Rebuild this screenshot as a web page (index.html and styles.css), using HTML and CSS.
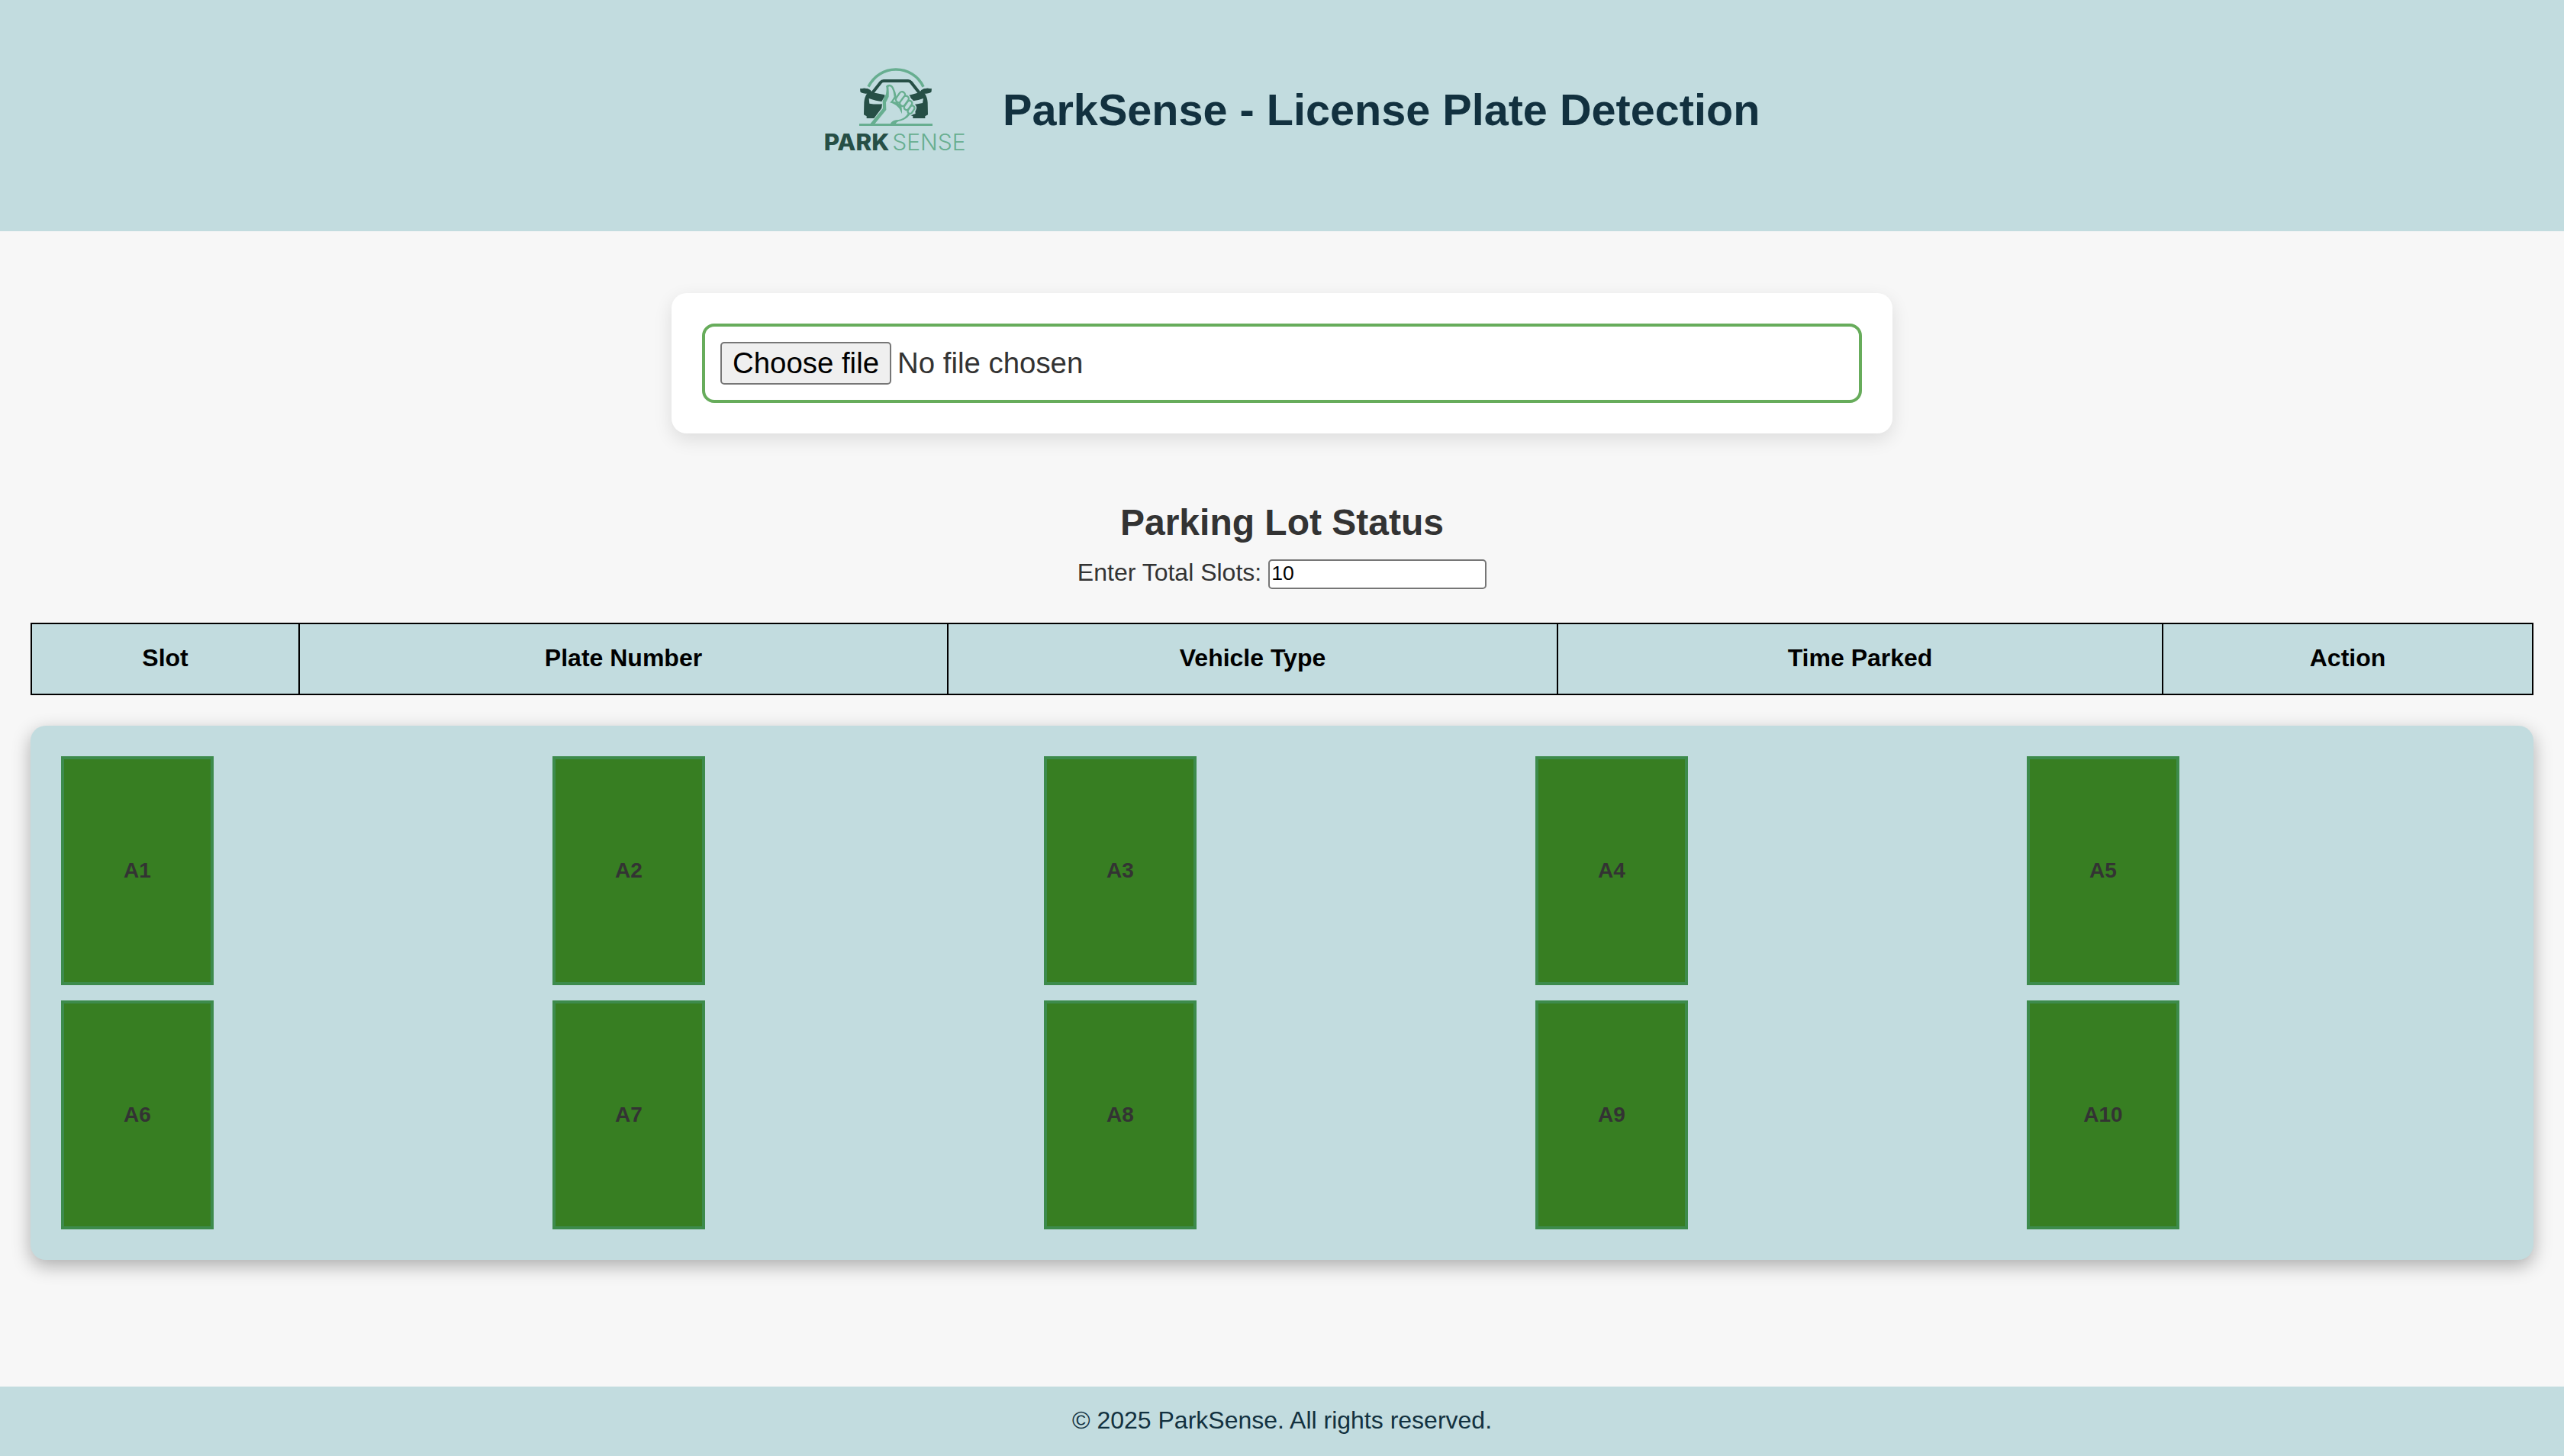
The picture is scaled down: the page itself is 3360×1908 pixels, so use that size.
FILE: index.html
```html
<!DOCTYPE html>
<html lang="en">
<head>
<meta charset="utf-8">
<title>ParkSense - License Plate Detection</title>
<link rel="stylesheet" href="styles.css">
</head>
<body>
<header class="header">
  <svg class="logo" viewBox="0 0 690 420" role="img" aria-label="Park Sense">
    <path class="mint-line" stroke-width="11" d="M234 131C256 88 296 63 342 63s88 25 108 68"/>
    <path class="dark-line" stroke-width="12" d="M249 156L282 114q5-6 12-6h96q7 0 12 6l33 42"/>
    <path class="dark" d="M204 139q14-4 28 0 12 4 16 14l50 10v6l-12 20q-20-2-50-12l2 20q24 4 50 2l-2 16-30 40h-29v-8l-11-6 1-48q1-20 11-35l8-11q-18 4-32-1-4-4-2-9Z"/>
    <path class="dark" d="M480 139q-14-4-28 0-12 4-16 14l-44 12 18 22q18-2 40-10l-3 18-32 6 4 36-20 6 10 4v8h48v-8l11-6-1-48q-1-20-11-35l-8-11q18 4 32-1 4-4 2-9Z"/>
    <path class="dark" d="M203 140q14-5 30 0l14 11q-6 9-24 7-18-2-21-8-1-5 1-10ZM481 140q-14-5-30 0l-14 11q6 9 24 7 18-2 21-8 1-5-1-10Z"/>
    <g class="finger-gap">
      <rect x="-12" y="-23" width="24" height="46" rx="12" transform="translate(360 172) rotate(34)"/>
      <rect x="-11" y="-22" width="22" height="44" rx="11" transform="translate(375 187) rotate(36)"/>
      <rect x="-10" y="-20" width="20" height="40" rx="10" transform="translate(390 204) rotate(36)"/>
      <rect x="-9" y="-17" width="18" height="34" rx="9" transform="translate(402 221) rotate(34)"/>
    </g>
    <path class="mint" d="M303 130q3-8 13-8 11 0 17 12 9 18 11 36-6 12-14 20 28 4 34 22l2 25-10-20q-12-18-38-24 8-6 17-23-1-20-9-34-8-10-13-4 2 21 1 38-8 17-11 22l1 30-46 56h-18l51-62-1-30 13-26q4-24 0-30Z"/>
    <path class="mint" d="M320 278q4-12 22-16 22-2 34-11 9-7 14-17l8 6q-10 14-24 20-14 6-22 7-8 4-12 11Z"/>
    <path class="mint" d="M326 188q30 2 38 22l2 27-10-20q-10-14-28-22Z"/>
    <g class="finger">
      <rect x="-12" y="-23" width="24" height="46" rx="12" transform="translate(360 172) rotate(34)"/>
      <rect x="-11" y="-22" width="22" height="44" rx="11" transform="translate(375 187) rotate(36)"/>
      <rect x="-10" y="-20" width="20" height="40" rx="10" transform="translate(390 204) rotate(36)"/>
      <rect x="-9" y="-17" width="18" height="34" rx="9" transform="translate(402 221) rotate(34)"/>
    </g>
    <path class="mint" d="M198 276h288v9H198Z"/>
    <text class="brand-bold" x="59" y="380" textLength="257" lengthAdjust="spacingAndGlyphs">PARK</text>
    <text class="brand-light" x="328" y="380" textLength="289" lengthAdjust="spacingAndGlyphs">SENSE</text>
  </svg>
  <h1 class="title">ParkSense - License Plate Detection</h1>
</header>
<main class="main">
  <section class="upload">
    <label class="file-field"><span class="file-button">Choose file</span><span class="file-name">No file chosen</span></label>
  </section>
  <h2 class="subtitle">Parking Lot Status</h2>
  <div class="total">
    <label class="total-label" for="slots">Enter Total Slots:</label>
    <input class="total-input" id="slots" type="text" value="10">
  </div>
  <table class="table">
    <colgroup><col class="c1"><col class="c2"><col class="c3"><col class="c4"><col class="c5"></colgroup>
    <thead><tr><th>Slot</th><th>Plate Number</th><th>Vehicle Type</th><th>Time Parked</th><th>Action</th></tr></thead>
  </table>
  <section class="lot">
    <div class="slot">A1</div><div class="slot">A2</div><div class="slot">A3</div><div class="slot">A4</div><div class="slot">A5</div>
    <div class="slot">A6</div><div class="slot">A7</div><div class="slot">A8</div><div class="slot">A9</div><div class="slot">A10</div>
  </section>
</main>
<footer class="footer">© 2025 ParkSense. All rights reserved.</footer>
</body>
</html>
```
FILE: styles.css
```css
* { box-sizing: border-box; }
body {
  margin: 0;
  height: 1908px;
  display: flex;
  flex-direction: column;
  background: #f7f7f7;
  color: #333;
  font-family: "Liberation Sans", Arial, sans-serif;
  font-size: 32px;
  overflow: hidden;
}
.header {
  height: 303px;
  flex: none;
  display: flex;
  align-items: flex-start;
  padding: 70px 0 0 1060px;
  background: #c2dcdf;
}
.logo { width: 230px; height: 140px; flex: none; }
.title {
  margin: 41px 0 0 24px;
  font-size: 57.6px;
  line-height: 66px;
  color: #12313f;
  white-space: nowrap;
}
.dark { fill: #264f46; }
.dark-line { fill: none; stroke: #264f46; }
.mint { fill: #67ae90; }
.mint-line { fill: none; stroke: #67ae90; }
.finger-gap { fill: #c2dcdf; stroke: #c2dcdf; stroke-width: 16; }
.finger { fill: #c2dcdf; stroke: #67ae90; stroke-width: 7; }
.brand-bold { font: 800 88px Inter, sans-serif; fill: #264f46; }
.brand-light { font: 300 88px Inter, sans-serif; fill: #67ae90; }
.main { flex: 1; padding: 81px 40px 0; }
.upload {
  width: 1600px;
  height: 184px;
  margin: 0 auto;
  padding: 40px;
  background: #fff;
  border-radius: 20px;
  box-shadow: 0 8px 24px rgba(0, 0, 0, .11);
}
.file-field {
  display: flex;
  align-items: center;
  height: 104px;
  padding: 0 20px;
  border: 4px solid #67ac5b;
  border-radius: 16px;
  font-size: 38.4px;
}
.file-button {
  width: 224px;
  height: 56px;
  border: 2px solid #767676;
  border-radius: 5px;
  background: #efefef;
  color: #000;
  line-height: 51px;
  text-align: center;
  white-space: nowrap;
}
.file-name { margin-left: 8px; }
.subtitle { margin: 90px 0 0; font-size: 48px; line-height: 54px; text-align: center; }
.total {
  display: flex;
  justify-content: center;
  gap: 9px;
  margin-top: 21px;
}
.total-label { line-height: 34px; }
.total-input {
  width: 286px;
  height: 39px;
  padding: 0 2px 2px;
  border: 2px solid #767676;
  border-radius: 5px;
  background: #fff;
  color: #000;
  font: 26.67px "Liberation Sans", Arial, sans-serif;
}
.table {
  width: 3280px;
  height: 95px;
  margin-top: 44px;
  border-collapse: collapse;
  table-layout: fixed;
  color: #000;
}
.table th { border: 2px solid #000; background: #c2dcdf; padding: 0 0 2px; }
.c1 { width: 351px; }
.c2 { width: 850px; }
.c3 { width: 799px; }
.c4 { width: 793px; }
.c5 { width: 485px; }
.lot {
  display: grid;
  grid-template-columns: repeat(5, 1fr);
  gap: 20px;
  margin-top: 40px;
  padding: 40px;
  background: #c2dcdf;
  border-radius: 20px;
  box-shadow: 0 8px 24px rgba(0, 0, 0, .3);
}
.slot {
  display: flex;
  align-items: center;
  justify-content: center;
  width: 200px;
  height: 300px;
  border: 4px solid #3d8b4c;
  background: #377e22;
  font-size: 28px;
  font-weight: bold;
}
.footer {
  flex: none;
  height: 91px;
  padding-top: 26px;
  background: #c2dcdf;
  color: #12313f;
  line-height: 36px;
  text-align: center;
}
```
